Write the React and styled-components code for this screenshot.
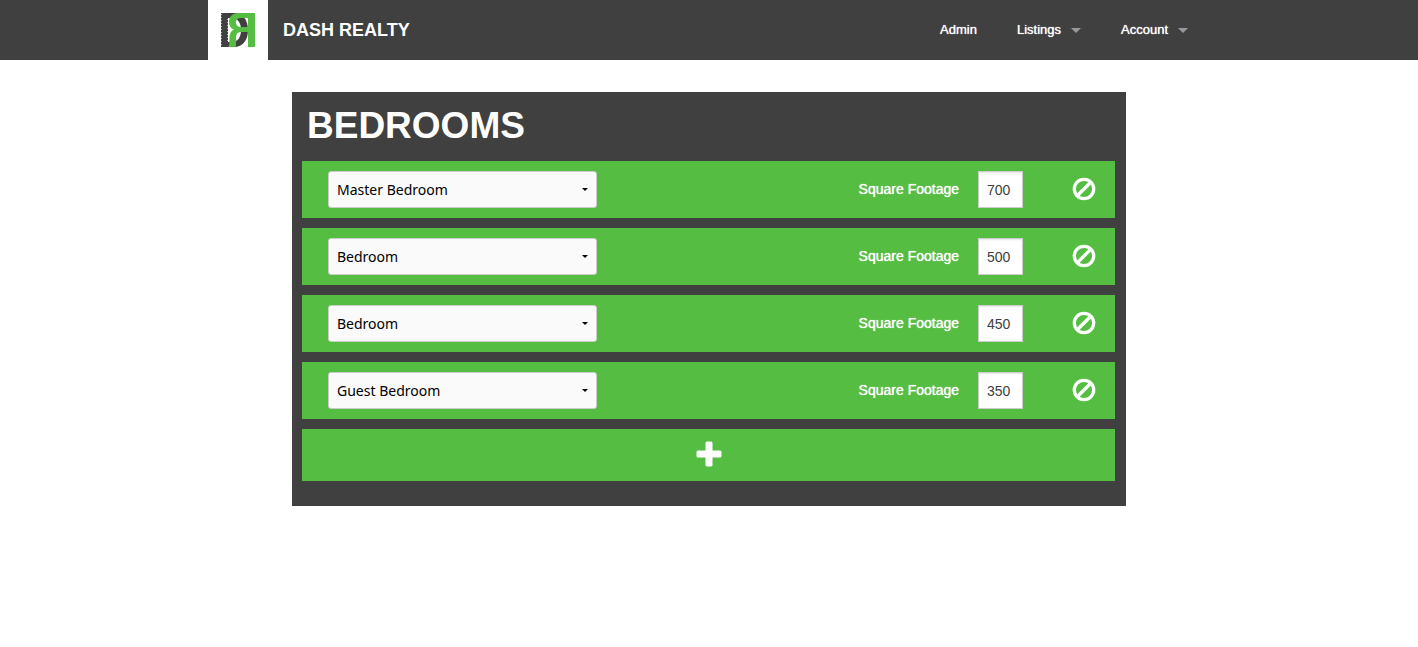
import React, { useState } from "react";
import styled, { createGlobalStyle } from "styled-components";

const GREEN = "#55bd41";
const DARK = "#404040";

const GlobalStyle = createGlobalStyle`
  *, *::before, *::after { box-sizing: border-box; }
  body {
    margin: 0;
    background: #fff;
    color: #fff;
    font-family: "Liberation Sans", Arial, sans-serif;
    font-size: 14px;
  }
`;

const TopBar = styled.header`
  background: ${DARK};
`;

const TopBarInner = styled.div`
  display: flex;
  align-items: center;
  max-width: 1002px;
  height: 60px;
  margin: 0 auto;
`;

const Brand = styled.a`
  display: flex;
  align-items: center;
  gap: 15px;
  color: #fff;
  text-decoration: none;
  font-size: 18px;
  font-weight: 700;
  line-height: 60px;
`;

const LogoTile = styled.span`
  display: flex;
  align-items: center;
  justify-content: center;
  width: 60px;
  height: 60px;
  background: #fff;
`;

const Nav = styled.nav`
  display: flex;
  gap: 40px;
  margin-left: auto;
  padding-right: 22px;
`;

const NavLink = styled.a`
  display: flex;
  align-items: center;
  gap: 10px;
  color: #fff;
  text-decoration: none;
  font-size: 13px;
  line-height: 60px;
  text-shadow: 0 0 1px #fff;
`;

const NavCaret = styled.span`
  border: 5px solid transparent;
  border-top-color: #999;
  border-bottom-width: 0;
`;

const Main = styled.main`
  max-width: 834px;
  margin: 32px auto;
  padding: 10px 11px 25px 10px;
  background: ${DARK};
`;

const Title = styled.h1`
  margin: 0 5px 11px;
  font-size: 37px;
  font-weight: 700;
  line-height: 48px;
`;

const RoomList = styled.ul`
  display: flex;
  flex-direction: column;
  gap: 10px;
  margin: 0 0 10px;
  padding: 0;
  list-style: none;
`;

const RoomRow = styled.li`
  display: flex;
  align-items: center;
  padding: 10px 19px 10px 26px;
  background: ${GREEN};
`;

const SelectWrap = styled.div`
  position: relative;
  flex: 0 1 269px;
  margin-right: auto;
`;

const Select = styled.select`
  display: block;
  width: 100%;
  height: 37px;
  padding: 0 8px;
  appearance: none;
  border: 1px solid #ccc;
  border-radius: 3px;
  background: #fafafa;
  color: #000;
  font-family: "Noto Sans", "Open Sans", sans-serif;
  font-size: 14px;
`;

const SelectCaret = styled.span`
  position: absolute;
  top: 17px;
  right: 9px;
  border: 3px solid transparent;
  border-top-color: #000;
  border-bottom-width: 0;
  pointer-events: none;
`;

const FootageLabel = styled.label`
  margin-right: 19px;
  padding-bottom: 2px;
  font-size: 14px;
  text-shadow: 0 0 1px #fff;
`;

const FootageInput = styled.input`
  width: 45px;
  height: 37px;
  margin-right: 49px;
  padding: 0 8px;
  border: 1px solid #ccc;
  border-radius: 0;
  background: #fff;
  box-shadow: inset 0 1px 2px rgba(0, 0, 0, 0.1);
  color: #404040;
  font-family: inherit;
  font-size: 14px;
`;

const IconButton = styled.button`
  display: flex;
  padding: 0 0 2px;
  border: 0;
  background: none;
  color: #fff;
  cursor: pointer;
`;

const AddButton = styled(IconButton)`
  align-items: center;
  justify-content: center;
  width: 100%;
  height: 52px;
  background: ${GREEN};
`;

function Logo() {
  return (
    <svg width="36" height="36" viewBox="0 0 36 36" aria-hidden="true">
      <path
        fill={DARK}
        fillRule="evenodd"
        d="M1 1h13C23 1 28 8 28 18s-5 17-14 17H1zM8 6v24h4c6 0 9-5 9-12S18 6 12 6z"
      />
      <path stroke="#fff" strokeDasharray="1 2" d="M1.5 2v33M7.5 7v23" opacity="0.6" />
      <path
        fill={GREEN}
        fillRule="evenodd"
        d="M35 1H19C13 1 9 4 9 10c0 4 2 6.500 5 7.500-3 1.500-4.500 4-4.500 8 0 4 0 7-1 9.500h7c1-2 .5-5 .5-8.500 0-4.500 1.500-6.500 5.500-6.500H28v15h7zM28 6v9h-6.500c-4 0-5.500-2-5.500-4.500S17.500 6 21.500 6z"
      />
    </svg>
  );
}

function BanIcon() {
  return (
    <svg width="24" height="24" viewBox="0 0 24 24" fill="none" stroke="currentColor" strokeWidth="3.300" aria-hidden="true">
      <circle cx="12" cy="12" r="9.700" />
      <path d="M5.500 18.500l13-13" />
    </svg>
  );
}

function PlusIcon() {
  return (
    <svg width="26" height="26" viewBox="0 0 26 26" fill="currentColor" aria-hidden="true">
      <rect x="9.500" y="0.500" width="7" height="25" rx="1.500" />
      <rect x="0.500" y="9.500" width="25" height="7" rx="1.500" />
    </svg>
  );
}

const INITIAL_ROOMS = [
  { id: 1, type: "Master Bedroom", footage: "700" },
  { id: 2, type: "Bedroom", footage: "500" },
  { id: 3, type: "Bedroom", footage: "450" },
  { id: 4, type: "Guest Bedroom", footage: "350" },
];

const ROOM_TYPES = ["Master Bedroom", "Bedroom", "Guest Bedroom"];

export default function App() {
  const [rooms, setRooms] = useState(INITIAL_ROOMS);

  const update = (id, change) =>
    setRooms(rooms.map((room) => (room.id === id ? { ...room, ...change } : room)));
  const remove = (id) => setRooms(rooms.filter((room) => room.id !== id));
  const add = () => setRooms([...rooms, { id: Date.now(), type: "Bedroom", footage: "" }]);

  return (
    <>
      <GlobalStyle />
      <TopBar>
        <TopBarInner>
          <Brand href="#">
            <LogoTile>
              <Logo />
            </LogoTile>
            DASH REALTY
          </Brand>
          <Nav>
            <NavLink href="#">Admin</NavLink>
            <NavLink href="#">
              Listings
              <NavCaret />
            </NavLink>
            <NavLink href="#">
              Account
              <NavCaret />
            </NavLink>
          </Nav>
        </TopBarInner>
      </TopBar>
      <Main>
        <Title>BEDROOMS</Title>
        <RoomList>
          {rooms.map((room) => (
            <RoomRow key={room.id}>
              <SelectWrap>
                <Select
                  aria-label="Room type"
                  value={room.type}
                  onChange={(e) => update(room.id, { type: e.target.value })}
                >
                  {ROOM_TYPES.map((type) => (
                    <option key={type}>{type}</option>
                  ))}
                </Select>
                <SelectCaret />
              </SelectWrap>
              <FootageLabel htmlFor={`footage-${room.id}`}>Square Footage</FootageLabel>
              <FootageInput
                id={`footage-${room.id}`}
                type="text"
                value={room.footage}
                onChange={(e) => update(room.id, { footage: e.target.value })}
              />
              <IconButton type="button" aria-label="Remove room" onClick={() => remove(room.id)}>
                <BanIcon />
              </IconButton>
            </RoomRow>
          ))}
        </RoomList>
        <AddButton type="button" aria-label="Add room" onClick={add}>
          <PlusIcon />
        </AddButton>
      </Main>
    </>
  );
}
